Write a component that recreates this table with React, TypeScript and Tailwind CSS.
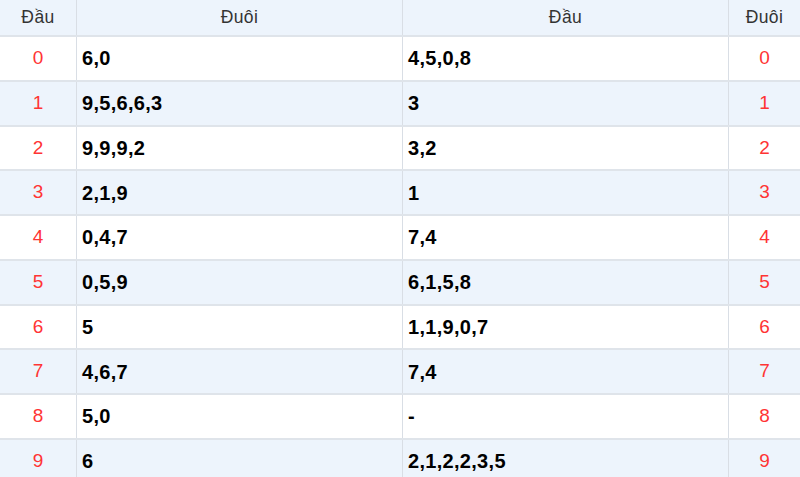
const rows = [
  { d: "0", tail: "6,0", head: "4,5,0,8" },
  { d: "1", tail: "9,5,6,6,3", head: "3" },
  { d: "2", tail: "9,9,9,2", head: "3,2" },
  { d: "3", tail: "2,1,9", head: "1" },
  { d: "4", tail: "0,4,7", head: "7,4" },
  { d: "5", tail: "0,5,9", head: "6,1,5,8" },
  { d: "6", tail: "5", head: "1,1,9,0,7" },
  { d: "7", tail: "4,6,7", head: "7,4" },
  { d: "8", tail: "5,0", head: "-" },
  { d: "9", tail: "6", head: "2,1,2,2,3,5" },
];

export default function App() {
  return (
    <div className="h-[477px] w-[800px] overflow-hidden bg-white font-['Liberation_Sans',Arial,sans-serif]">
      <div className="grid h-[37px] grid-cols-[77px_326px_326px_71px] border-b-2 border-[#dfe4ea] bg-[#edf4fc] text-[17.5px] tracking-[0.4px] text-[#333]">
        <div className="flex items-center justify-center border-r border-[#d9dee5]">Đầu</div>
        <div className="flex items-center justify-center border-r border-[#d9dee5]">Đuôi</div>
        <div className="flex items-center justify-center border-r border-[#d9dee5]">Đầu</div>
        <div className="flex items-center justify-center">Đuôi</div>
      </div>
      {rows.map((r, i) => (
        <div
          key={r.d}
          className={
            "grid h-[44.75px] grid-cols-[77px_326px_326px_71px] border-b-2 border-[#dfe4ea] " +
            (i % 2 === 1 ? "bg-[#edf4fc]" : "bg-white")
          }
        >
          <div className="flex items-center justify-center border-r border-[#d9dee5] text-[19px] text-[#ff3434]">
            {r.d}
          </div>
          <div className="flex items-center border-r border-[#d9dee5] pl-[5px] text-[20px] font-bold tracking-[0.3px] text-black">
            {r.tail}
          </div>
          <div className="flex items-center border-r border-[#d9dee5] pl-[5px] text-[20px] font-bold tracking-[0.3px] text-black">
            {r.head}
          </div>
          <div className="flex items-center justify-center text-[19px] text-[#ff3434]">
            {r.d}
          </div>
        </div>
      ))}
    </div>
  );
}
